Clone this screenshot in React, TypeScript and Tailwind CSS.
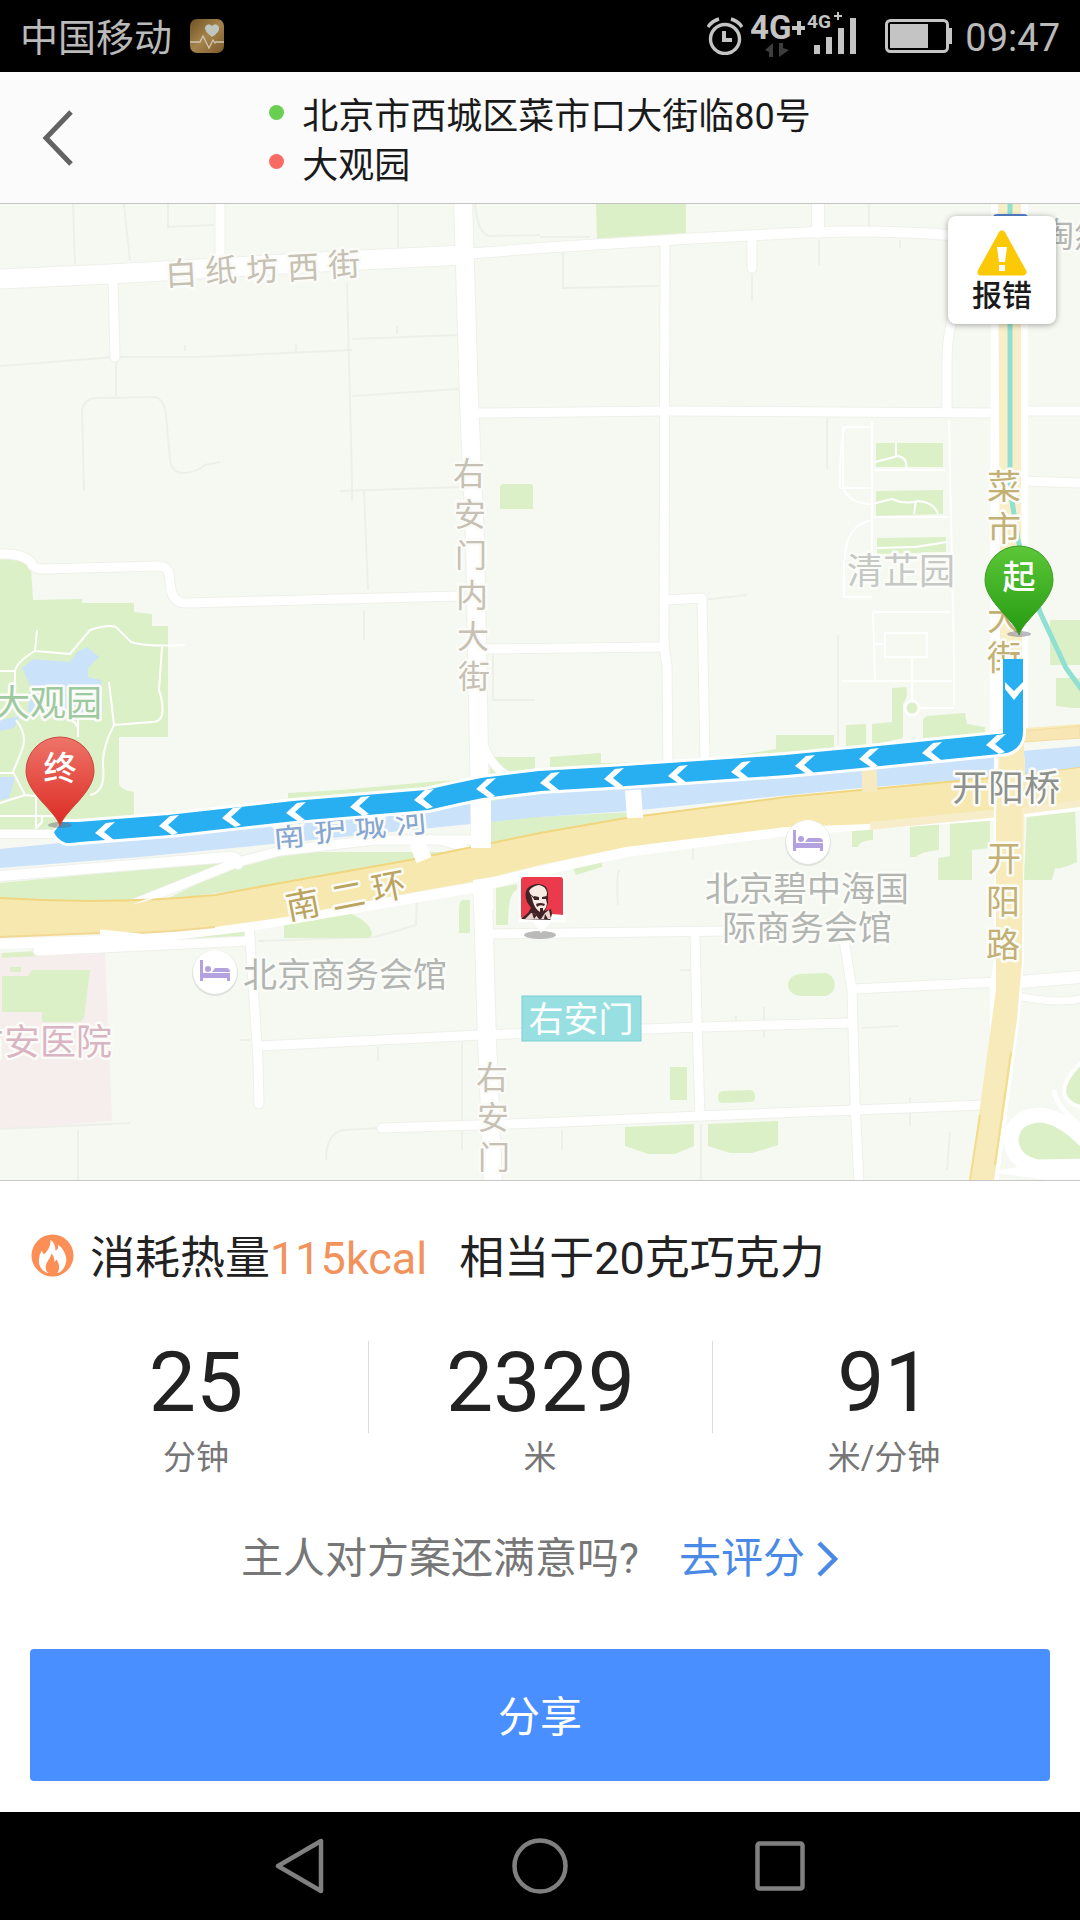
type Glyph = [char: string, x: number, y: number];

const chevrons = [
    [105, 832], [169, 825], [232, 817], [296, 812], [360, 806], [424, 799], [486, 788],
    [550, 782], [614, 778], [678, 775], [741, 771], [805, 765], [869, 758], [932, 752], [996, 744],
];

const stats = [
    { value: "25", unit: "分钟" },
    { value: "2329", unit: "米" },
    { value: "91", unit: "米/分钟" },
];

const minorLines = [
    "M73 204L75 264", "M124 204L130 261", "M168 204V227L214 225", "M398 204V248", "M347 283L352 480V500",
    "M0 366L115 357L200 357L352 350", "M352 339L457 335", "M352 396L459 389", "M116 360V396",
    "M84 490L82 410Q84 399 96 398L155 397Q165 400 166 415L170 460Q172 474 185 473Q197 472 205 465L220 462",
    "M340 491L462 487", "M364 491L368 590M364 610V640", "M475 204Q478 235 490 236L540 235", "M185 351V345M296 352V344M397 334V326",
    "M563 252V288L658 286M540 237H590M869 204V226M819 240V265M752 272V300M900 240V248",
    "M827 416V469M702 600L747 595M838 635V745M493 654V700H535", "M619 870Q616 880 618 905M693 846V860",
    "M258 941L374 937L400 930L416 925L417 895L470 885", "M78 1130V1180M0 1129L130 1123M326 1160Q326 1132 345 1130L380 1128",
    "M462 1042V1150M378 1047V1061M240 1040H250", "M680 970H690M764 1007V1038M736 1016V1021M862 1028L898 1026M910 1097V1126M701 1124V1180M562 1130V1150M950 1132L947 1170",
];

const roads: [number, string][] = [
    [19, "M0 279L110 274L320 262L465 255"],
    [10, "M465 254L540 248L700 238L815 232Q890 230 950 235"],
    [9, "M220 204V262"],
    [9, "M113 280L115 357"],
    [18, "M463 200L469 400L475 540L478 700L481 860L483 900L487 1040L493 1184"],
    [9, "M478 413L664 411L995 413M1024 411H1080"],
    [9, "M0 554Q22 553 31 562Q33 569 42 569L160 566Q168 567 169 574L171 590Q174 603 186 603L460 596"],
    [9, "M665 243L664 640Q664 650 667 665L668 765"],
    [9, "M484 649L664 647M668 600L702 598L705 760"],
    [9, "M752 240V268"],
    [12, "M818 204V232"],
    [9, "M952 320Q947 340 947 360V411"],
    [9, "M1024 481L1080 483"],
    [8, "M0 834H60"],
    [10, "M0 876L228 857Q238 856 238 864"],
    [9, "M131 905L238 862L280 851L375 840H478"],
    [7, "M430 838L470 850"],
    [8, "M484 745Q492 770 515 780"],
    [9, "M38 951L248 941"],
    [9, "M249 925L253 985L258 1060L259 1104"],
    [9, "M260 1046L380 1040L480 1035L700 1027L850 1023"],
    [9, "M382 1128L540 1123L700 1116L855 1110L982 1105"],
    [9, "M492 934L730 931"],
    [9, "M695 934L697 1020L700 1116"],
    [9, "M844 940L852 990L855 1100L859 1184"],
    [9, "M854 989L998 982"],
    [12, "M1020 982L1080 977"],
    [7, "M1022 997Q1060 1004 1080 999"],
];

const parks = [
    "M596 204H686V235L597 240Z",
    "M502 484H531Q533 484 533 486V509H500V486Z",
    "M876 443H943V467H876Z", "M876 491L943 490V514L876 516Z", "M877 538L946 537V552L877 554Z",
    "M0 559Q20 557 31 568L33 600L82 599V603H134V612L152 614V626H168V737H119V784Q121 790 134 792V830H0Z",
    "M1050 620H1080V665H1050ZM1056 678H1080V708H1072L1056 706Z",
    "M550 757L601 753V763L660 762V775H550Z", "M738 755L776 749V735H834V752L740 762Z",
    "M846 725L866 724V745L846 748Z", "M872 724L892 722V688L906 687Q909 696 903 704V738L872 745Z",
    "M923 719L927 716L965 713L967 724L985 727V735L923 738Z",
    "M288 793L340 790L440 781L540 775V800L288 812Z", "M490 757H535V775H490Z",
    "M0 883L230 861L150 900L0 905ZM238 863L290 852H480L480 820L630 812V820L540 835L410 862L286 884L165 900Z",
    "M852 829L873 826V840Q860 840 858 847H852ZM910 823L939 822V850Q920 852 916 857H910ZM950 822L990 820V848L972 850V880H938V858L950 856ZM1027 812L1075 808L1077 862Q1060 870 1055 868L1052 880H1024Z",
    "M573 868L602 861V867L576 875Z",
    "M284 922L345 911Q372 922 372 935L368 938H284ZM463 900H470V933H459V910Q459 900 463 900ZM496 888L517 884V890Q508 892 508 925H496ZM140 943L244 930V937Z",
    "M2 976H28L32 970H90L84 1018L80 1022H42V1012H2ZM10 967H21V972H10ZM2 953L37 951V956L2 958Z",
    "M800 974L825 973C838 975 838 994 825 996L800 996C784 994 784 976 800 974ZM670 1067H687V1100H670Z",
    "M723 1091L750 1090Q755 1090 755 1097Q755 1102 750 1102L723 1103Q718 1103 718 1097Q718 1091 723 1091Z",
    "M625 1127L694 1124V1146L675 1154H648L625 1146ZM708 1124L778 1121V1145L752 1153H730L708 1146Z",
];

const parkPaths = [
    "M37 630L35 651L70 654L90 630Q108 624 116 627L131 642Q145 647 185 645",
    "M35 651Q16 662 15 672V690M0 671H15M162 647L159 690Q164 705 162 715Q160 722 152 722L114 725L109 682",
    "M114 725Q102 748 103 765Q106 792 90 795M16 720Q28 735 22 750L13 772L25 795L36 796V828L42 822V815M0 773H13M0 803L25 795M78 720V737M0 816H60M68 718Q76 722 78 728",
    "M843 425V488Q850 504 872 504L892 499Q905 505 918 501Q934 502 938 514M872 422V588M846 427Q840 430 840 488H872M846 427H872M949 420L954 660V705M872 470H945M872 517H948M873 612L875 680M873 612H951M885 633H927V657H885ZM875 644H885M912 657V700M876 548L915 547L947 542M845 560Q845 525 872 520M844 560V597H872M896 443V456M875 462L898 456Q908 458 906 469M916 501L914 514M842 681H952M912 708H954",
];

const labels: { size: number; color: string; rotate?: number; glyphs: Glyph[] }[] = [
    { size: 32, color: "#c6c1b4", rotate: -3, glyphs: [["白", 181, 273], ["纸", 221, 270], ["坊", 262, 269], ["西", 303, 267], ["街", 344, 264]] },
    { size: 32, color: "#c6c1b4", glyphs: [["右", 469, 473], ["安", 470, 514], ["门", 471, 555], ["内", 472, 595], ["大", 473, 636], ["街", 474, 676]] },
    { size: 32, color: "#c6c1b4", glyphs: [["右", 492, 1077], ["安", 493, 1117], ["门", 494, 1157]] },
    { size: 34, color: "#c2b075", glyphs: [["菜", 1004, 487], ["市", 1004, 529], ["口", 1004, 573], ["大", 1004, 618], ["街", 1004, 658]] },
    { size: 34, color: "#c2b075", glyphs: [["开", 1004, 859], ["阳", 1003, 902], ["路", 1003, 945]] },
    { size: 34, color: "#bba45f", rotate: -11, glyphs: [["南", 303, 905], ["二", 348, 896], ["环", 389, 887]] },
    { size: 32, color: "#86a6d0", rotate: -5, glyphs: [["南", 289, 834], ["护", 330, 829], ["城", 370, 825], ["河", 411, 821]] },
];

const places = [
    { text: "大观园", x: 48, y: 716, size: 36, color: "#9dc9a0" },
    { text: "右安医院", x: 40, y: 1055, size: 36, color: "#d9b5c4" },
    { text: "清芷园", x: 901, y: 584, size: 36, color: "#c5c8c5" },
    { text: "开阳桥", x: 1006, y: 801, size: 36, color: "#8e918c" },
    { text: "陶然", x: 1074, y: 247, size: 34, color: "#b4b7b3" },
    { text: "北京碧中海国", x: 807, y: 901, size: 34, color: "#b2b5b2" },
    { text: "际商务会馆", x: 807, y: 940, size: 34, color: "#b2b5b2" },
    { text: "北京商务会馆", x: 345, y: 987, size: 34, color: "#b2b5b2" },
];

const river = "M0 849L60 843L150 836L293 820L480 803L540 793L630 785L860 768L1000 753L1080 746V767L1000 777L860 788L630 811L540 817L480 823L293 842L140 857L0 868Z";
const ringRoad = "M0 898Q110 905 215 895L286 882L410 860L472 847L540 833L626 818L786 797L1000 777L1080 767V802L1000 811L870 824L786 827L626 847L540 865L472 882L410 893L286 917L215 927Q140 935 100 933L0 937Z";
const routeLine = "M1013 659V732Q1013 744 998 744L860 758L786 765L626 776L540 781L482 788L458 793L427 800L294 811L169 825L66 833";

function HotelMarker({ x, y }: { x: number; y: number }) {
    return (
        <g transform={`translate(${x} ${y})`}>
            <circle r="23" fill="#dfe2dc" cy="1" />
            <circle r="22" fill="#fff" />
            <g fill="#b3a1e0">
                <path d="M-15 -12H-12V2H15V9H12V6H-12V9H-15Z" />
                <path d="M-12 1H15V6H-12Z" />
                <circle cx="-7" cy="-3" r="3" />
                <path d="M-3 0L0 -4H11Q15 -4 15 0Z" />
            </g>
        </g>
    );
}

function Pin({ x, y, label, fill }: { x: number; y: number; label: string; fill: string }) {
    return (
        <g transform={`translate(${x} ${y})`}>
            <ellipse rx="12" ry="3" fill="#667" opacity=".45" />
            <path
                d="M0 1C-4 -14 -34 -32 -34 -54A34 34 0 0 1 34 -54C34 -32 4 -14 0 1Z"
                fill={`url(#${fill})`}
                stroke={fill === "pinRed" ? "#c9463f" : "#3c9a24"}
            />
            <text y="-45" textAnchor="middle" fontSize="33" fontWeight="500" fill="#fff">{label}</text>
        </g>
    );
}

function RouteMap() {
    return (
        <svg viewBox="0 204 1080 976" className="block w-full" role="img" aria-label="步行路线">
            <defs>
                <linearGradient id="pinRed" x2="0" y2="1">
                    <stop stopColor="#ee7469" />
                    <stop offset="1" stopColor="#dc2a22" />
                </linearGradient>
                <linearGradient id="pinGreen" x2="0" y2="1">
                    <stop stopColor="#5cc738" />
                    <stop offset="1" stopColor="#259a12" />
                </linearGradient>
            </defs>
            <rect y="204" width="1080" height="976" fill="#f6f8f2" />
            <path d="M0 953L105 953L112 1121L0 1129Z" fill="#f5eeec" />
            <g fill="none" stroke="#edefe9" strokeWidth="2">
                {minorLines.map((d) => <path key={d} d={d} />)}
            </g>

            <g fill="#dcf0c7">
                {parks.map((d) => <path key={d} d={d} />)}
            </g>
            <path d="M22 668L33 659L70 662L77 652L87 647L99 657L88 668V677L101 680L103 712L60 716L28 712L30 685ZM0 720L20 716L14 728L0 731ZM0 777H15L9 798L0 800Z" fill="#cbe2fb" />
            <g fill="none" stroke="#fff" strokeWidth="2">
                {parkPaths.map((d) => <path key={d} d={d} />)}
            </g>
            <circle cx="912" cy="708" r="7" fill="#dcf0c7" stroke="#fff" strokeWidth="3" />

            <path d={river} fill="#cbe2fb" />
            <g fill="none" strokeLinejoin="round">
                {roads.map(([w, d]) => <path key={d} d={d} stroke="#eef0ea" strokeWidth={w + 2} strokeLinecap="round" />)}
                {roads.map(([w, d]) => <path key={d} d={d} stroke="#fff" strokeWidth={w} strokeLinecap="round" />)}
            </g>

            {/* ring road and its frontage lane */}
            <path d="M0 944L130 940L250 926L472 888L540 871L626 852L786 831L1000 815L1080 806" fill="none" stroke="#fff" strokeWidth="10" />
            <path d={ringRoad} fill="#f6e8ae" />
            <path d="M0 898Q110 905 215 895L286 882L410 860L472 847L540 833L626 818L786 797L1000 777L1080 767" fill="none" stroke="#f0d67f" strokeWidth="2" />
            <path d="M0 937L100 933Q140 935 215 927" fill="none" stroke="#f2d894" strokeWidth="2" />
            <path d="M100 932L140 936" stroke="#fff" strokeWidth="5" />
            <path d="M870 826L1000 813L1080 803" fill="none" stroke="#f8edcb" strokeWidth="8" />
            <path d="M417 842L424 860M633 790L635 818" stroke="#fff" strokeWidth="16" />
            <path d="M131 905L170 890L150 900Z" fill="#fff" />
            <path d="M471 800H491V848H471ZM473 880L493 877V910H474Z" fill="#fff" />
            <path d="M869 770L870 792" stroke="#f8eac0" strokeWidth="15" />

            {/* interchange */}
            <path d="M1084 1060Q1064 1078 1064 1092Q1066 1104 1084 1108" fill="#dcf0c7" stroke="#fff" strokeWidth="4" />
            <path d="M1054 1090Q1056 1108 1084 1128" fill="none" stroke="#fff" strokeWidth="5" />
            <path d="M1090 1146Q1062 1115 1038 1115Q1012 1118 1011 1140Q1012 1162 1038 1167L1090 1166" fill="#dcf0c7" stroke="#fff" strokeWidth="15" />
            <path d="M990 1172L1090 1186V1170L1030 1165Z" fill="#fff" />

            {/* north-south avenue */}
            <path d="M991 204H1028V740H1024V960L1020 1015L998 1184H968L990 1095V985L994 960V740H990Z" fill="#fff" />
            <path d="M998 204H1021V480L1022 620V740L1025 760L1022 960L1017 1010L994 1180H970L982 1095L996 1000L996 815L1000 720V620Z" fill="#f8efc9" />
            <path d="M1000 730L1080 724V738L1024 742V776L1080 768V800L1022 808V960L1017 1020L994 1180H970L996 990V815L1000 760Z" fill="#f7ebbb" />
            <path d="M1024 731L1080 726V738L1024 742Z" fill="#f8e6b5" stroke="#f6dda0" />
            <path d="M980 1115L970 1180M1011 1052L995 1165" stroke="#f3dc8c" strokeWidth="2" />
            <path d="M1025 757L1080 748V767L1026 774Z" fill="#cbe2fb" />
            <path d="M1010 204V488L1018 540L1040 612L1066 668L1082 690" fill="none" stroke="#8fdfd2" strokeWidth="5" />
            <rect x="993" y="214" width="35" height="20" rx="4" fill="#5584cf" />

            <g textAnchor="middle" stroke="#fbfcf8" strokeWidth="5" strokeLinejoin="round" paintOrder="stroke">
                {labels.map(({ size, color, rotate = 0, glyphs }) =>
                    glyphs.map(([char, x, y]) => (
                        <text
                            key={`${char}${x}${y}`}
                            transform={`translate(${x} ${y}) rotate(${rotate})`}
                            y="12"
                            fontSize={size}
                            fill={color}
                        >
                            {char}
                        </text>
                    ))
                )}
                {places.map((p) => (
                    <text key={p.text} x={p.x} y={p.y} fontSize={p.size} fill={p.color}>{p.text}</text>
                ))}
            </g>

            <HotelMarker x={808} y={842} />
            <HotelMarker x={215} y={972} />

            {/* restaurant */}
            <ellipse cx="540" cy="935" rx="16" ry="4" fill="#a9aaa6" opacity=".8" />
            <path d="M519 877Q519 875 522 875H562Q565 875 565 878V922H551L541 933L533 922H519Z" fill="#fff" />
            <rect x="521" y="877" width="42" height="42" rx="3" fill="#ea3a4b" />
            <path d="M521 919L528 913L531 908L527 902Q524 894 527 889Q531 884 539 884Q548 885 548 893L548 903L545 911L551 909L553 920Z" fill="#3f2326" />
            <path d="M529 891Q532 886 539 885Q546 886 547 893L546 899L547 904Q545 912 540 912Q535 909 533 902Q532 897 529 891Z" fill="#f7ebe3" />
            <path d="M534 896L539 897V900H534ZM542 897L547 896V899H542ZM529 893L534 897V899ZM536 904Q540 902 545 904L544 906Q540 904 537 907ZM540 908H543V912H540Z" fill="#3f2326" />
            <path d="M525 919L531 913L535 914L539 919ZM541 919L545 913L549 910L551 919Z" fill="#e9d5cf" />
            <path d="M532 913L537 915L534 919ZM545 914L548 919H544Z" fill="#3f2326" />
            <path d="M552 914L564 915V921H550Z" fill="#fff" />

            <rect x="522" y="996" width="119" height="45" fill="#97dfe0" stroke="#7ccfd3" />
            <text x="581" y="1032" textAnchor="middle" fontSize="35" fill="#fff">右安门</text>

            {/* walking route */}
            <g fill="none" strokeLinejoin="round">
                <path d={routeLine} stroke="#fff" strokeWidth="26" />
                <path d="M75 821H62L54 834Q56 840 66 844L78 843Z" fill="#27aff1" stroke="#fff" strokeWidth="4" />
                <path d={routeLine} stroke="#27aff1" strokeWidth="20" />
                <path d="M80 822H62L54 832Q56 839 66 843L80 842Z" fill="#27aff1" />
            </g>
            <g fill="#fff">
                {chevrons.map(([x, y]) => (
                    <polygon key={x} points="-10,1 1,-9 10,-10 -1,0 9,8 3,10" transform={`translate(${x} ${y})`} />
                ))}
                <polygon points="-9,-8 0,1 9,-8 9,-1 0,10 -9,-1" transform="translate(1014 690)" />
            </g>

            <Pin x={60} y={825} label="终" fill="pinRed" />
            <Pin x={1019} y={634} label="起" fill="pinGreen" />
        </svg>
    );
}

function StatusBar() {
    return (
        <div className="flex h-[72px] items-center justify-between bg-black px-5 text-[38px] leading-none text-[#bababa]">
            <div className="flex items-center gap-[18px]">
                <span className="pt-1">中国移动</span>
                <svg viewBox="0 0 34 34" className="size-[34px]">
                    <defs>
                        <linearGradient id="health" x2="1" y2="1">
                            <stop stopColor="#6f5226" />
                            <stop offset=".5" stopColor="#a5834b" />
                            <stop offset="1" stopColor="#7b5a2b" />
                        </linearGradient>
                    </defs>
                    <rect width="34" height="34" rx="7" fill="url(#health)" />
                    <path d="M22 18Q14 12 15 8Q18 3 22 7Q26 3 29 8Q30 13 22 18Z" fill="#bfc6c0" />
                    <path d="M0 23H10L13 17L19 29L23 21L25 24L26 23H34" fill="none" stroke="#cfc6b0" strokeWidth="1.3" />
                </svg>
            </div>
            <div className="flex items-center">
                <svg viewBox="0 0 36 38" className="mr-2 h-[38px] w-9" fill="none" stroke="#c4c4c4" strokeWidth="3.4">
                    <circle cx="18" cy="22" r="14.5" />
                    <path d="M17 14V23H25" strokeWidth="4" />
                    <path d="M1 10Q5 4 12 2M35 10Q31 4 24 2" />
                </svg>
                <svg viewBox="0 0 110 48" className="mr-6 h-12 w-[110px]" fill="#c4c4c4">
                    <text x="-1" y="27" fontSize="33" fontWeight="700">4G</text>
                    <path d="M46 9H50V14H54V18H50V23H46V18H41V14H46Z" />
                    <path d="M22 31V45H18V40L14 38ZM28 31V45L38 38L32 36V31Z" fill="#3d3d3d" />
                    <text x="56" y="16" fontSize="19" fontWeight="700">4G</text>
                    <path d="M86 0H88V3H91V5H88V8H86V5H83V3H86Z" />
                    <path d="M63 33H69V42H63ZM75 25H81V42H75ZM87 16H93V42H87ZM99 6H105V42H99Z" />
                </svg>
                <svg viewBox="0 0 68 34" className="mr-3 h-[34px] w-[68px]">
                    <rect x="1.5" y="1.5" width="61" height="31" rx="4" fill="none" stroke="#c4c4c4" strokeWidth="3" />
                    <rect x="5" y="5" width="38" height="24" fill="#c4c4c4" />
                    <path d="M63 9H67V25H63Z" fill="#c4c4c4" />
                </svg>
                <span className="pt-1">09:47</span>
            </div>
        </div>
    );
}

export default function App() {
    return (
        <div className="min-h-screen bg-white font-[Roboto,'Noto_Sans_CJK_SC',sans-serif] text-[#222]">
            <StatusBar />

            <header className="grid h-[132px] grid-cols-[1fr_auto_1fr] items-center border-b border-[#c4c5c2] bg-[#fbfbfb]">
                <button type="button" aria-label="返回" className="ml-10 w-9">
                    <svg viewBox="0 0 36 56" className="h-14 w-9" fill="none" stroke="#626262" strokeWidth="5">
                        <path d="M31 2L6 28L31 54" />
                    </svg>
                </button>
                <ul className="pt-2 text-[36px] leading-[49px] text-[#1a1a1a]">
                    <li className="flex items-start gap-[18px]">
                        <span className="mt-3 size-[15px] rounded-full bg-[#69cf50]" />
                        北京市西城区菜市口大街临80号
                    </li>
                    <li className="flex items-start gap-[18px]">
                        <span className="mt-3 size-[15px] rounded-full bg-[#f76b64]" />
                        大观园
                    </li>
                </ul>
            </header>

            <main>
                <section className="relative">
                    <RouteMap />
                    <button
                        type="button"
                        className="absolute top-3 right-6 flex h-[108px] w-[108px] flex-col items-center rounded-lg bg-white pt-3 text-[30px] leading-10 font-medium text-[#1a1a1a] shadow-[0_1px_6px_rgba(0,0,0,0.35)]"
                    >
                        <svg viewBox="0 0 52 48" className="h-12 w-[52px]">
                            <path d="M26 6L47 44H5Z" fill="#fbc906" stroke="#fbc906" strokeWidth="7" strokeLinejoin="round" />
                            <path d="M21 19H31L29 34H23ZM23 37H29V43H23Z" fill="#fff" />
                        </svg>
                        报错
                    </button>
                </section>

                <section className="border-t border-[#c8c8c6] px-6">
                    <p className="flex items-start pt-[45px] pl-[7px] text-[45px] leading-[66px]">
                        <svg viewBox="0 0 44 44" className="mt-2 mr-4 size-[43px]">
                            <circle cx="22" cy="22" r="21.5" fill="#fc8f55" />
                            <path d="M20 6C24 9 25 13 25 17Q28 16 28 11C33 15 37 22 36 28C35 35 31 39 27 40C30 35 29 30 26 26L24 29Q24 23 21 20C20 25 15 29 15 34Q15 38 18 40C12 39 8 33 8 27Q8 22 11 17L13 21C18 17 20 12 20 6Z" fill="#fff" />
                        </svg>
                        消耗热量<span className="text-[#f2925c]">115kcal</span>
                        <span className="ml-8">相当于20克巧克力</span>
                    </p>

                    <dl className="grid grid-cols-3 pt-[49px] text-center">
                        {stats.map(({ value, unit }, i) => (
                            <div key={unit} className="flex flex-col-reverse">
                                <dt className="text-[33px] leading-[50px] text-[#777]">{unit}</dt>
                                <dd className={i > 0 ? "border-l border-[#dcdcdc] pb-2 text-[84px] leading-[84px]" : "pb-2 text-[84px] leading-[84px]"}>
                                    {value}
                                </dd>
                            </div>
                        ))}
                    </dl>

                    <p className="flex items-center justify-center pt-[46px] text-[42px] leading-[60px] text-[#777]">
                        主人对方案还满意吗?
                        <a href="#rate" className="ml-10 flex items-center gap-3 text-[#4a8ae6]">
                            去评分
                            <svg viewBox="0 0 22 36" className="h-9 w-[22px]" fill="none" stroke="currentColor" strokeWidth="4.5">
                                <path d="M2 2L18 18L2 34" />
                            </svg>
                        </a>
                    </p>

                    <div className="px-[6px] pt-[60px] pb-[31px]">
                        <button type="button" className="h-[132px] w-full rounded-sm bg-[#4a8fff] pt-1 text-[42px] text-white">
                            分享
                        </button>
                    </div>
                </section>
            </main>

            <nav className="flex h-[108px] items-center justify-center bg-black">
                <button type="button" aria-label="后退" className="flex w-60 justify-center">
                    <svg viewBox="0 0 56 56" className="size-14" fill="none" stroke="#808080" strokeWidth="4.5" strokeLinejoin="round">
                        <path d="M49 3V53L6 28Z" />
                    </svg>
                </button>
                <button type="button" aria-label="主屏幕" className="flex w-60 justify-center">
                    <svg viewBox="0 0 56 56" className="size-14" fill="none" stroke="#808080" strokeWidth="4.5">
                        <circle cx="28" cy="28" r="25.5" />
                    </svg>
                </button>
                <button type="button" aria-label="最近任务" className="flex w-60 justify-center">
                    <svg viewBox="0 0 56 56" className="size-14" fill="none" stroke="#808080" strokeWidth="4.5">
                        <rect x="5.5" y="5.5" width="45" height="45" rx="2" />
                    </svg>
                </button>
            </nav>
        </div>
    );
}
